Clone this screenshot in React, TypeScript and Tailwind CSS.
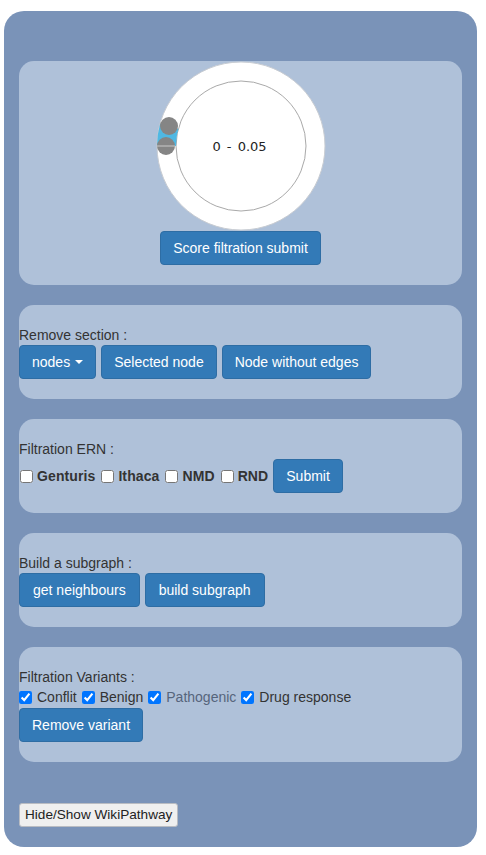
import React from 'react';

const btn =
  'inline-flex items-center h-[34px] px-[12px] rounded-[4px] border border-[#2e6da4] bg-[#337ab7] text-white text-[14px] leading-[20px]';

const RangeCircle = () => (
  <div className="relative w-[170px] h-[170px]">
    <svg width="170" height="170" viewBox="0 0 170 170">
      <circle cx="85" cy="85" r="84" fill="#fff" stroke="#c8ccd2" strokeWidth="1" />
      <circle cx="85" cy="85" r="65" fill="#fff" stroke="#a9a9a9" strokeWidth="1" />
      {/* selected range arc */}
      <path d="M 10.5 85 A 74.5 74.5 0 0 1 13.2 65.2" fill="none" stroke="#4fb8e3" strokeWidth="19" />
      <circle cx="13" cy="65" r="9" fill="#858585" />
      <circle cx="10" cy="85" r="9" fill="#858585" />
      <line x1="1" y1="85" x2="19" y2="85" stroke="#c9c9c9" strokeWidth="1" />
    </svg>
    <div className="absolute inset-0 flex items-center justify-center pr-[2px] pt-px text-[13px] [word-spacing:2px] text-[#222] font-['DejaVu_Sans',sans-serif]">
      0 - 0.05
    </div>
  </div>
);

const Panel = ({ children, className = '' }: { children: React.ReactNode; className?: string }) => (
  <div className={`bg-[#afc1d9] rounded-[15px] pb-[20px] ${className}`}>{children}</div>
);

const Label = ({ children }: { children: React.ReactNode }) => (
  <div className="h-[20px] leading-[20px] text-[14px] text-[#333]">{children}</div>
);

export default function App() {
  return (
    <div className="min-h-screen bg-white font-['Liberation_Sans',Arial,sans-serif]">
      <div className="ml-[4px] mt-[11px] w-[473px] h-[836px] rounded-[20px] bg-[#7a93b8] px-[15px] pt-[50px]">
        <div className="flex flex-col gap-[20px]">
          {/* score filtration */}
          <Panel className="flex flex-col items-center">
            <RangeCircle />
            <button className={btn}>Score filtration submit</button>
          </Panel>

          {/* remove section */}
          <Panel className="pt-[20px]">
            <Label>Remove section :</Label>
            <div className="flex gap-[5px]">
              <button className={btn}>
                nodes
                <span className="ml-[5px] w-0 h-0 border-x-[4px] border-x-transparent border-t-[4px] border-t-white" />
              </button>
              <button className={`${btn} px-[12.5px]`}>Selected node</button>
              <button className={btn}>Node without edges</button>
            </div>
          </Panel>

          {/* filtration ERN */}
          <Panel className="pt-[20px]">
            <Label>Filtration ERN :</Label>
            <div className="flex items-center text-[14px] font-bold text-[#333]">
              {['Genturis', 'Ithaca', 'NMD', 'RND'].map((n) => (
                <label key={n} className="flex items-center mr-[5px]">
                  <input type="checkbox" className="m-0 ml-px w-[13px] h-[13px]" />
                  <span className="ml-[4px] tracking-[0.1px]">{n}</span>
                </label>
              ))}
              <button className={`${btn} font-normal`}>Submit</button>
            </div>
          </Panel>

          {/* subgraph */}
          <Panel className="pt-[20px]">
            <Label>Build a subgraph :</Label>
            <div className="flex gap-[5px]">
              <button className={`${btn} px-[13px]`}>get neighbours</button>
              <button className={`${btn} px-[13px]`}>build subgraph</button>
            </div>
          </Panel>

          {/* variants */}
          <Panel className="pt-[20px]">
            <Label>Filtration Variants :</Label>
            <div className="flex items-center h-[21px] text-[14px] text-[#333]">
              {['Conflit', 'Benign', 'Pathogenic', 'Drug response'].map((n) => (
                <label key={n} className="flex items-center mr-[5px]">
                  <input type="checkbox" defaultChecked className="m-0 w-[13px] h-[13px]" />
                  <span className={`ml-[5px] ${n === 'Pathogenic' ? 'text-[#56657c]' : ''}`}>{n}</span>
                </label>
              ))}
            </div>
            <button className={`${btn} px-[12.5px]`}>Remove variant</button>
          </Panel>
        </div>

        <button className="mt-[41px] h-[24px] px-[5px] rounded-[3px] border border-[#b9bcc2] bg-[#efefef] text-[13.6px] text-[#222]">
          Hide/Show WikiPathway
        </button>
      </div>
    </div>
  );
}
